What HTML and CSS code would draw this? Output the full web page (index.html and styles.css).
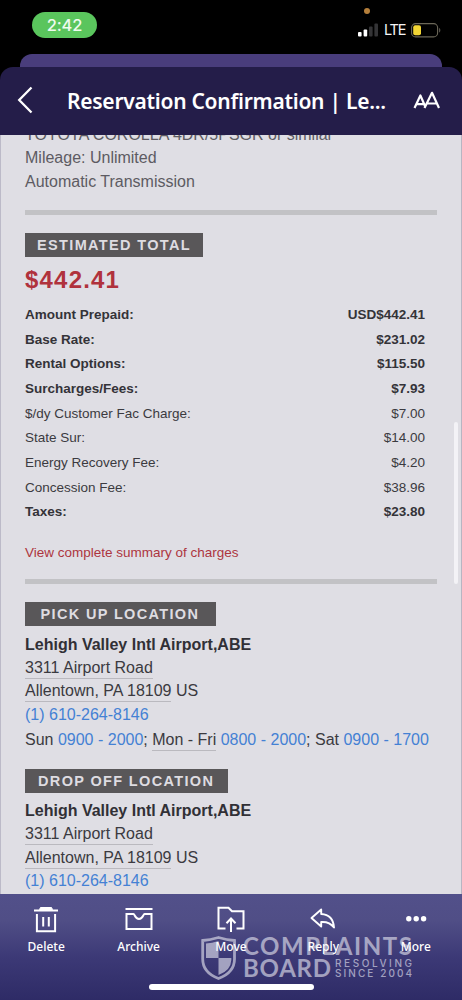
FILE: index.html
```html
<!DOCTYPE html>
<html lang="en">
<head>
<meta charset="utf-8">
<title>Reservation Confirmation</title>
<link rel="stylesheet" href="styles.css">
</head>
<body>
<div class="phone">
  <div class="status">
    <span class="time">2:42</span>
    <span class="mic-dot"></span>
    <div class="status-right">
      <svg class="signal" width="20" height="14" viewBox="0 0 20 14">
        <rect x="0" y="9" width="3.6" height="4.5" rx="1" fill="#fff"/>
        <rect x="5.6" y="6.5" width="3.6" height="7" rx="1" fill="#fff"/>
        <rect x="11" y="3.5" width="3.6" height="10" rx="1" fill="#343436"/>
        <rect x="16.4" y="0.5" width="3.6" height="13" rx="1" fill="#343436"/>
      </svg>
      <span class="lte">LTE</span>
      <svg class="battery" width="30" height="15" viewBox="0 0 30 15">
        <rect x="0.6" y="0.6" width="26" height="13.3" rx="4" fill="none" stroke="#6b6758" stroke-width="1.1"/>
        <rect x="2.2" y="2.3" width="7.8" height="10" rx="2" fill="#f2d534"/>
        <path d="M28.2 5v4.6c1.5-.6 1.5-4 0-4.600z" fill="#68655c"/>
      </svg>
    </div>
  </div>
  <div class="back-card"></div>
  <header class="header">
    <svg class="back" width="18" height="30" viewBox="0 0 18 30"><path d="M16.500 2.500 4.200 15 16.500 27.500" fill="none" stroke="#fff" stroke-width="2.300"/></svg>
    <h1 class="title">Reservation Confirmation | Le...</h1>
    <svg class="text-size" width="28" height="20" viewBox="0 0 28 20"><path d="M1.500 18 7.400 5.500 12.200 16.500M3.600 14.200H11M11.500 18 19 2.800 26 18M14 13.500H23.700" fill="none" stroke="#fff" stroke-width="2.200" stroke-linejoin="round"/></svg>
  </header>
  <main class="mail">
    <div class="car">
      <p class="line">TOYOTA COROLLA 4DR/5PSGR or similar</p>
      <p class="line">Mileage: Unlimited</p>
      <p class="line">Automatic Transmission</p>
    </div>
    <div class="rule rule-top"></div>
    <div class="tag tag-total"><span>ESTIMATED TOTAL</span></div>
    <p class="price">$442.41</p>
    <dl class="charges">
      <div class="row strong"><dt>Amount Prepaid:</dt><dd>USD$442.41</dd></div>
      <div class="row strong"><dt>Base Rate:</dt><dd>$231.02</dd></div>
      <div class="row strong"><dt>Rental Options:</dt><dd>$115.50</dd></div>
      <div class="row strong"><dt>Surcharges/Fees:</dt><dd>$7.93</dd></div>
      <div class="row"><dt>$/dy Customer Fac Charge:</dt><dd>$7.00</dd></div>
      <div class="row"><dt>State Sur:</dt><dd>$14.00</dd></div>
      <div class="row"><dt>Energy Recovery Fee:</dt><dd>$4.20</dd></div>
      <div class="row"><dt>Concession Fee:</dt><dd>$38.96</dd></div>
      <div class="row strong"><dt>Taxes:</dt><dd>$23.80</dd></div>
    </dl>
    <p class="summary">View complete summary of charges</p>
    <div class="rule rule-mid"></div>
    <div class="tag tag-pickup"><span>PICK UP LOCATION</span></div>
    <section class="place">
      <p class="line name">Lehigh Valley Intl Airport,ABE</p>
      <p class="line"><span class="detected">3311 Airport Road</span></p>
      <p class="line"><span class="detected">Allentown, PA 18109</span> US</p>
      <p class="line link">(1) 610-264-8146</p>
      <p class="line hours">Sun <span class="link">0900 - 2000</span>; <span class="detected">Mon - Fri</span> <span class="link">0800 - 2000</span>; Sat <span class="link">0900 - 1700</span></p>
    </section>
    <div class="tag tag-dropoff"><span>DROP OFF LOCATION</span></div>
    <section class="place">
      <p class="line name">Lehigh Valley Intl Airport,ABE</p>
      <p class="line"><span class="detected">3311 Airport Road</span></p>
      <p class="line"><span class="detected">Allentown, PA 18109</span> US</p>
      <p class="line link">(1) 610-264-8146</p>
    </section>
    <div class="scrollbar"></div>
  </main>
  <nav class="toolbar">
    <div class="action">
      <svg width="30" height="30" viewBox="0 0 30 30" fill="none" stroke="#fff" stroke-width="2"><path d="M3 5.500H27M5.900 9V26.200H24.100V9M12.200 12V21.500M17.800 12V21.500"/><path d="M8.500 4.500 9.500 2.500H20.500L21.500 4.500Z" fill="#fff" stroke-width="1"/></svg>
      <span>Delete</span>
    </div>
    <div class="action">
      <svg width="30" height="30" viewBox="0 0 30 30" fill="none" stroke="#fff" stroke-width="2"><path d="M1.500 4H28.500M2.500 9H9.500C10.800 9 11 14 15 14S19.200 9 20.500 9H27.500V24H2.500Z"/></svg>
      <span>Archive</span>
    </div>
    <div class="action">
      <svg width="30" height="30" viewBox="0 0 30 30" fill="none" stroke="#fff" stroke-width="2"><path d="M9.500 23.500H2.500V2.800H12.500L16 6.300H27.500V23.500H20.500M15 27V13.500M10.500 18.200 15 13.500 19.500 18.200"/></svg>
      <span>Move</span>
    </div>
    <div class="action">
      <svg width="30" height="30" viewBox="0 0 30 30" fill="none" stroke="#fff" stroke-width="1.900" stroke-linejoin="round"><path d="M13.200 4.500 3.500 13 13.200 21.500V17C19.500 16.500 23 18.500 26 22.500 25.500 15 21.500 9.500 13.200 9Z"/></svg>
      <span>Reply</span>
    </div>
    <div class="action">
      <svg width="30" height="30" viewBox="0 0 30 30" fill="#fff"><circle cx="7.800" cy="13.800" r="2.700"/><circle cx="15.200" cy="13.800" r="2.700"/><circle cx="22.600" cy="13.800" r="2.700"/></svg>
      <span>More</span>
    </div>
    <svg class="watermark" width="216" height="50" viewBox="0 0 216 50" fill="#dadae8">
      <path d="M2.700 7.500Q10 7 18.500 4.500 27 7 34.500 7.500V26Q34.500 39.500 18.500 45.500 2.700 39.500 2.700 26Z" fill="none" stroke="#dadae8" stroke-width="2.800"/>
      <path d="M18.500 8V25H6V10.500Q12 10 18.500 8ZM18.500 25H31.300V27Q31 37.500 18.500 42Z"/>
      <text class="wm-big" x="43" y="22" textLength="169">COMPLAINTS</text>
      <text class="wm-big" x="43" y="44" textLength="88">BOARD</text>
      <text class="wm-small" x="135" y="34" textLength="77">RESOLVING</text>
      <text class="wm-small" x="135" y="44.300" textLength="77">SINCE 2004</text>
    </svg>
    <div class="home"></div>
  </nav>
</div>
</body>
</html>
```
FILE: styles.css
```css
* { box-sizing: border-box; }
body, h1, p, dl, dd { margin: 0; }
body { background: #000; }

.phone {
  position: relative;
  width: 462px;
  height: 1000px;
  overflow: hidden;
  display: flex;
  flex-direction: column;
  font-family: "Liberation Sans", Arial, sans-serif;
}

.status {
  position: relative;
  height: 54px;
  flex: none;
  display: flex;
  justify-content: space-between;
  align-items: flex-start;
  padding: 12px 21px 0 32px;
}
.time {
  width: 65px;
  height: 26px;
  border-radius: 13px;
  background: #5ac55d;
  color: #effbef;
  font: 500 16.500px/26px Inter, sans-serif;
  letter-spacing: -0.2px;
  text-align: center;
}
.mic-dot {
  position: absolute;
  left: 364px;
  top: 8px;
  width: 6px;
  height: 6px;
  border-radius: 50%;
  background: #b57f3b;
}
.status-right { display: flex; align-items: center; padding-top: 10px; }
.lte { color: #f4f4f4; font: 400 14.500px/16px Inter, sans-serif; width: 22px; margin: 0 5px 0 6px; letter-spacing: -1.200px; }

.back-card {
  height: 25px;
  flex: none;
  margin: 0 20px -12px;
  border-radius: 12px 12px 0 0;
  background: #493d7c;
}
.header {
  position: relative;
  height: 68px;
  flex: none;
  display: flex;
  align-items: center;
  padding: 0 21px 0 15px;
  border-radius: 13px 13px 0 0;
  background: #241d49;
}
.back { flex: none; margin-top: -3px; }
.title {
  flex: 1;
  padding-left: 34px;
  color: #fff;
  font: 600 21px/30px "Noto Sans", sans-serif;
  letter-spacing: -0.260px;
  white-space: nowrap;
}
.text-size { flex: none; margin-top: -3px; }

.mail {
  position: relative;
  height: 759px;
  flex: none;
  overflow: hidden;
  background: #dfdee4;
  border-left: 1px solid #bcbac8;
  border-right: 1px solid #b7b5c2;
  padding: 0 24px;
  color: #3b3a40;
  font-size: 16px;
}
.car { margin-top: -12px; color: #5d5b62; }
.line { height: 23.4px; line-height: 23.4px; white-space: nowrap; }
.rule { height: 5px; background: #c2c2c5; }
.rule-top { margin-top: 17px; width: 412px; }
.rule-mid { width: 412px; margin-top: 14.500px; }
.tag {
  height: 24px;
  background: #595759;
  color: #dedce1;
  font-weight: 700;
  font-size: 14.500px;
  line-height: 24px;
  letter-spacing: 1.350px;
  white-space: nowrap;
}
.tag-total { width: 178px; margin-top: 18px; padding-left: 12px; }
.tag-pickup { width: 191px; margin-top: 18px; padding-left: 15.500px; }
.tag-dropoff { width: 203px; margin-top: 17px; padding-left: 13px; }
.price {
  height: 46px;
  line-height: 46px;
  color: #b0323c;
  font-size: 24px;
  font-weight: 700;
  letter-spacing: 1.200px;
}
.charges { font-size: 13.500px; padding-right: 12px; }
.row { display: flex; justify-content: space-between; height: 24.650px; line-height: 24.650px; }
.strong { font-weight: 700; color: #343338; }
.summary { margin-top: 15px; height: 25px; line-height: 25px; font-size: 13.500px; color: #ad3540; }
.place { padding-top: 6.100px; }
.name { font-weight: 700; color: #313036; }
.link { color: #4481d4; }
.detected { box-shadow: 0 1px 0 #bab9bf; display: inline-block; height: 20px; line-height: 20px; }
.hours { margin-top: 2.400px; }
.scrollbar {
  position: absolute;
  right: 3px;
  top: 287px;
  width: 4px;
  height: 162px;
  border-radius: 2px;
  background: #f3f2f6;
}

.toolbar {
  position: relative;
  height: 106px;
  flex: none;
  display: flex;
  background: linear-gradient(#52508a 0%, #504e86 25%, #3c3976 60%, #2e2b66 100%);
}
.action {
  width: 92.400px;
  display: flex;
  flex-direction: column;
  align-items: center;
  padding-top: 11px;
  color: #fff;
  font: 500 12px/16px "Noto Sans", sans-serif;
}
.action span { position: relative; z-index: 1; margin-top: 4px; }
.watermark { position: absolute; left: 200px; top: 39px; opacity: 0.660; }
.wm-big { font: 700 24px Lato, sans-serif; }
.wm-small { font: 500 10px Inter, sans-serif; }
.home {
  position: absolute;
  left: 149px;
  top: 90px;
  width: 165px;
  height: 6px;
  border-radius: 3px;
  background: #fff;
}
```
